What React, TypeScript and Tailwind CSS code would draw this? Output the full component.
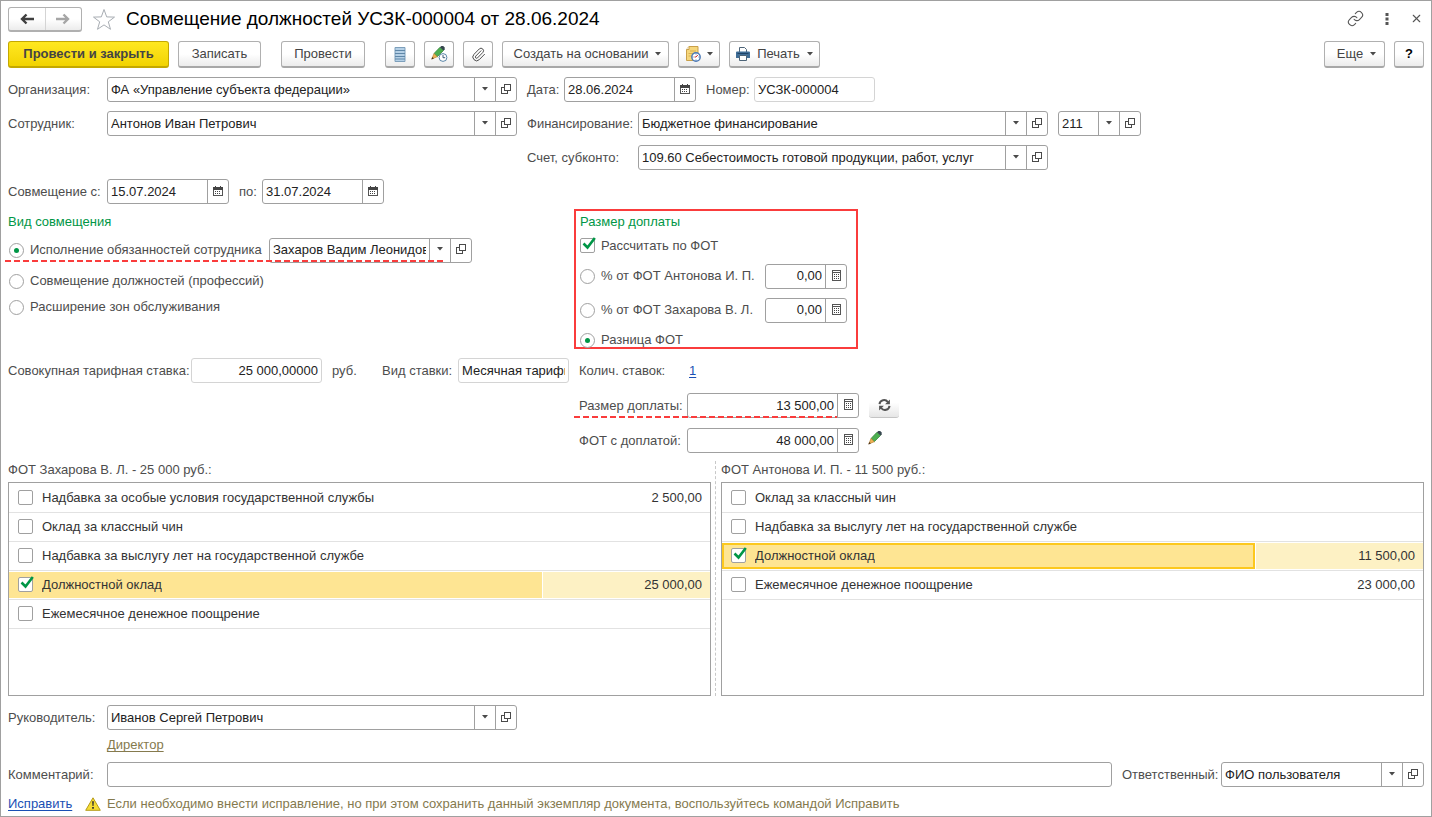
import React, { useState } from 'react'
import { Link, Paperclip, X } from 'lucide-react'

type Accrual = { name: string; sum?: string; checked?: boolean }

const zakharovRows: Accrual[] = [
  { name: 'Надбавка за особые условия государственной службы', sum: '2 500,00' },
  { name: 'Оклад за классный чин' },
  { name: 'Надбавка за выслугу лет на государственной службе' },
  { name: 'Должностной оклад', sum: '25 000,00', checked: true },
  { name: 'Ежемесячное денежное поощрение' },
]

const antonovRows: Accrual[] = [
  { name: 'Оклад за классный чин' },
  { name: 'Надбавка за выслугу лет на государственной службе' },
  { name: 'Должностной оклад', sum: '11 500,00', checked: true },
  { name: 'Ежемесячное денежное поощрение', sum: '23 000,00' },
]

/* Icons */

function Caret() {
  return (
    <svg width="6" height="4" viewBox="0 0 6 4" fill="#4a4a4a">
      <path d="M0 0h6L3 3.6z" />
    </svg>
  )
}

function OpenIcon() {
  return (
    <svg width="10" height="10" viewBox="0 0 10 10" fill="none" stroke="#4a4a4a" shapeRendering="crispEdges">
      <path d="M3.500.5h6v6h-6z" />
      <path d="M3 3.500H.5v6h6V7" />
    </svg>
  )
}

function CalendarIcon() {
  return (
    <svg width="10" height="10" viewBox="0 0 10 10" shapeRendering="crispEdges">
      <path d="M.5 1.500h9v8h-9z" fill="#fff" stroke="#555" />
      <path d="M0 1h10v3H0zM2 0h1v1H2zM7 0h1v1H7z" fill="#444" />
      <path d="M2 5.500h6M2 7.500h6" stroke="#444" strokeDasharray="1 1" />
    </svg>
  )
}

function CalcIcon() {
  return (
    <svg width="9" height="11" viewBox="0 0 9 11" shapeRendering="crispEdges">
      <path d="M.5.5h8v10h-8z" fill="#fff" stroke="#555" />
      <path d="M1 2.500h7" stroke="#555" />
      <path d="M2 4.500h5M2 6.500h5M2 8.500h5" stroke="#444" strokeDasharray="1 1" />
    </svg>
  )
}

function Arrow({ back }: { back?: boolean }) {
  return (
    <svg width="14" height="12" viewBox="0 0 14 12" fill="none" stroke={back ? '#404040' : '#a6a6a6'} strokeWidth="2.400">
      {back ? <path d="M14 6H2M6.500 1.500L2 6l4.500 4.500" /> : <path d="M0 6h12M7.500 1.500L12 6l-4.500 4.500" />}
    </svg>
  )
}

function StarIcon() {
  return (
    <svg width="24" height="23" viewBox="0 0 24 23" fill="#fff" stroke="#a8adb3">
      <path d="M12 1.500l2.700 7.400 7.800.2-6.200 4.700 2.200 7.500L12 16.900l-6.500 4.400 2.200-7.500L1.500 9.100l7.800-.2z" />
    </svg>
  )
}

function ListIcon() {
  return (
    <svg width="12" height="15" viewBox="0 0 12 15">
      <path d="M1 .5h10v14H1z" fill="#b5d0e6" stroke="#7d9fbb" />
      <path d="M1 3.500h10M1 6.500h10M1 9.500h10M1 12h10" stroke="#5f87a8" />
    </svg>
  )
}

function PencilBody() {
  return (
    <>
      <path d="M3 7.500L9 1.200l3.500 3.300-6.200 6.200z" fill="#4caf50" stroke="#2e7d32" strokeWidth=".7" />
      <path d="M9 1.200L10.300 0h1.900l1.500 1.500v1.800l-1.200 1.200z" fill="#37474f" />
      <path d="M3 7.500l3.300 3.200L.8 13z" fill="#f0b354" stroke="#b07828" strokeWidth=".6" />
      <path d="M.4 13.500l.9-2.500 1.600 1.500z" fill="#4a3520" />
    </>
  )
}

function PencilIcon() {
  return (
    <svg width="14" height="14" viewBox="0 0 14 14">
      <PencilBody />
    </svg>
  )
}

function PencilClockIcon() {
  return (
    <svg width="17" height="16" viewBox="0 0 17 16">
      <PencilBody />
      <circle cx="12" cy="11.500" r="3.900" fill="#fff" stroke="#5b86a8" />
      <path d="M12 9v2.700h2.200" fill="none" stroke="#3d5c78" />
    </svg>
  )
}

function NoteClockIcon() {
  return (
    <svg width="16" height="16" viewBox="0 0 16 16">
      <path d="M1.500 3.500l2.500-3h9v14H1.500z" fill="#f6d77c" stroke="#c9a04a" />
      <path d="M1.500 3.500H4v-3" fill="#fff" stroke="#c9a04a" />
      <path d="M5 5h6M3.500 7.500h5M3.500 10h3" stroke="#d9b04f" />
      <circle cx="11" cy="11" r="4.200" fill="#fff" stroke="#4a78b5" strokeWidth="1.400" />
      <path d="M11 7.500v1M11 13.500v1M7.500 11h1M13.500 11h1" stroke="#4a78b5" />
      <path d="M11 11l1.800-2M11 11H9.500" fill="none" stroke="#c62f2f" />
    </svg>
  )
}

function PrinterIcon() {
  return (
    <svg width="14" height="14" viewBox="0 0 14 14">
      <path d="M3.500.5h5l2 2V6h-7z" fill="#fff" stroke="#4d6478" />
      <path d="M1 4.500h12a1 1 0 011 1V11H0V5.500a1 1 0 011-1z" fill="#3f6d96" />
      <path d="M1.500 6.500h11" stroke="#1f4468" />
      <path d="M3.500 8.500h7v5h-7z" fill="#fff" stroke="#4d6478" />
    </svg>
  )
}

function RefreshIcon() {
  return (
    <svg width="13" height="12" viewBox="0 0 13 12" fill="none" stroke="#555" strokeWidth="2">
      <path d="M1.500 5.200A4.600 4.600 0 019.800 3" />
      <path d="M11.500 6.800A4.600 4.600 0 013.200 9" />
      <path d="M11.900.4v4.800H7.100zM1.100 11.600V6.800h4.800z" fill="#555" stroke="none" />
    </svg>
  )
}

function WarningIcon() {
  return (
    <svg width="16" height="14" viewBox="0 0 16 14">
      <path d="M8 .8l7.300 12.500H.7z" fill="#f5dc35" stroke="#b59b1a" strokeLinejoin="round" />
      <path d="M7.100 4.200h1.800l-.4 4.800h-1zM7.100 10h1.800v1.700H7.100z" fill="#333" />
    </svg>
  )
}

/* Controls */

function ToolButton({ className = '', children, ...rest }: React.ButtonHTMLAttributes<HTMLButtonElement>) {
  return (
    <button
      type="button"
      className={`flex h-[27px] shrink-0 items-center justify-center rounded-[3px] border border-b-2 border-[#b0b0b0] border-b-[#a8a8a8] bg-linear-to-b from-white from-50% to-[#ececec] text-[#444] ${className}`}
      {...rest}
    >
      {children}
    </button>
  )
}

type FieldProps = {
  id: string
  label?: string
  value?: string
  className: string
  kind?: 'combo' | 'date' | 'number' | 'plain'
  readOnly?: boolean
  alignRight?: boolean
}

function Field({ id, label, value = '', className, kind = 'plain', readOnly, alignRight }: FieldProps) {
  const [text, setText] = useState(value)
  const side = 'flex w-[21px] shrink-0 items-center justify-center border-l border-[#a0a0a0] pb-[2px]'
  return (
    <div className={`flex h-[25px] rounded-[3px] border bg-white ${readOnly ? 'border-[#d4d4d4]' : 'border-[#a0a0a0]'} ${className}`}>
      <input
        id={id}
        type="text"
        aria-label={label}
        value={text}
        readOnly={readOnly}
        onChange={(e) => setText(e.target.value)}
        className={`w-full min-w-0 flex-1 bg-transparent px-[3px] text-[#222] outline-none ${alignRight ? 'text-right' : ''}`}
      />
      {kind === 'combo' && (
        <>
          <button type="button" aria-label="Выбрать" className={side}><Caret /></button>
          <button type="button" aria-label="Открыть" className={side}><OpenIcon /></button>
        </>
      )}
      {kind === 'date' && <button type="button" aria-label="Календарь" className={side}><CalendarIcon /></button>}
      {kind === 'number' && <button type="button" aria-label="Калькулятор" className={side}><CalcIcon /></button>}
    </div>
  )
}

function Radio({ id, name, checked, onChange }: { id: string; name: string; checked: boolean; onChange: () => void }) {
  return (
    <input
      id={id}
      type="radio"
      name={name}
      checked={checked}
      onChange={onChange}
      className="flex size-[15px] shrink-0 appearance-none items-center justify-center rounded-full border border-[#a0a0a0] bg-white before:size-[5px] before:rounded-full checked:before:bg-[#009646]"
    />
  )
}

function Checkbox({ id, label, defaultChecked }: { id?: string; label?: string; defaultChecked?: boolean }) {
  return (
    <span className="relative block size-[15px] shrink-0">
      <input
        id={id}
        type="checkbox"
        aria-label={label}
        defaultChecked={defaultChecked}
        className="peer block size-[15px] appearance-none rounded-[2px] border border-[#a0a0a0] bg-white"
      />
      <svg
        width="14"
        height="13"
        viewBox="0 0 14 13"
        className="pointer-events-none absolute -top-px left-[2px] hidden peer-checked:block"
        fill="none"
        stroke="#009646"
        strokeWidth="2.600"
      >
        <path d="M1.500 6.500l4 4L12.800 1" />
      </svg>
    </span>
  )
}

function DashedMark({ className }: { className: string }) {
  return (
    <span
      className={`pointer-events-none absolute h-[2px] bg-[repeating-linear-gradient(90deg,#fa3c3c_0_6px,transparent_6px_9px)] ${className}`}
    />
  )
}

function AccrualTable({ title, rows, outlined }: { title: string; rows: Accrual[]; outlined?: boolean }) {
  return (
    <section className="flex min-w-0 flex-1 flex-col">
      <h2 className="h-[21px] leading-[18px] text-[#4d4d4d]">{title}</h2>
      <div className="min-h-[214px] flex-1 border border-[#a0a0a0]">
        <table className="w-full table-fixed border-collapse text-[#333]">
          <colgroup>
            <col className="w-[76%]" />
            <col />
          </colgroup>
          <tbody>
            {rows.map((row) => (
              <tr key={row.name} className="h-[29px] border-b border-[#e2e2e2]">
                <td className="p-0">
                  <div
                    className={`flex h-[26px] items-center gap-[9px] border-2 pl-[7px] ${row.checked ? 'bg-[#fee593]' : ''} ${
                      row.checked && outlined ? 'border-[#fcc81e]' : 'border-transparent'
                    }`}
                  >
                    <Checkbox label={row.name} defaultChecked={row.checked} />
                    <span className="truncate">{row.name}</span>
                  </div>
                </td>
                <td className="p-0">
                  <div className={`ml-px flex h-[26px] items-center justify-end pr-2 ${row.checked ? 'bg-[#fdf1c4]' : ''}`}>
                    {row.sum}
                  </div>
                </td>
              </tr>
            ))}
          </tbody>
        </table>
      </div>
    </section>
  )
}

export default function App() {
  const [kind, setKind] = useState('duties')
  const [calc, setCalc] = useState('difference')

  return (
    <div className="flex min-h-screen flex-col border border-[#a0a0a0] bg-white px-[7px] font-['Liberation_Sans',Arial,sans-serif] text-[13px] text-[#4d4d4d]">
      {/* Title */}
      <header className="flex h-[37px] items-center">
        <div className="flex h-[25px] w-[74px] rounded-[3px] border border-b-2 border-[#b0b0b0] bg-linear-to-b from-white from-50% to-[#ececec]">
          <button type="button" aria-label="Назад" className="flex flex-1 items-center justify-center"><Arrow back /></button>
          <button type="button" aria-label="Вперед" className="flex flex-1 items-center justify-center border-l border-[#d4d4d4]"><Arrow /></button>
        </div>
        <button type="button" aria-label="В избранное" className="mx-[10px]"><StarIcon /></button>
        <h1 className="flex-1 text-[19px] text-black">Совмещение должностей УСЗК-000004 от 28.06.2024</h1>
        <div className="flex items-center gap-4 pr-px pb-[2px] text-[#555]">
          <button type="button" aria-label="Ссылка"><Link size={17} strokeWidth={1.500} /></button>
          <button type="button" aria-label="Меню" className="px-[5px]">
            <svg width="4" height="12" viewBox="0 0 4 12" fill="#555"><path d="M.5 0h3v3h-3zM.5 4.500h3v3h-3zM.5 9h3v3h-3z" /></svg>
          </button>
          <button type="button" aria-label="Закрыть"><X size={13} strokeWidth={2} /></button>
        </div>
      </header>

      {/* Commands */}
      <div className="mt-[3px] flex items-center gap-[9px]">
        <button
          type="button"
          className="h-[27px] w-[161px] rounded-[3px] border border-b-2 border-[#c4a800] bg-linear-to-b from-[#ffe81f] to-[#f2d300] font-bold text-[#444]"
        >
          Провести и закрыть
        </button>
        <ToolButton className="w-[83px]">Записать</ToolButton>
        <ToolButton className="ml-[11px] w-[84px]">Провести</ToolButton>
        <ToolButton className="ml-[11px] w-[30px]" aria-label="Движения документа"><ListIcon /></ToolButton>
        <ToolButton className="w-[30px]" aria-label="История изменений"><PencilClockIcon /></ToolButton>
        <ToolButton className="w-[30px]" aria-label="Файлы"><Paperclip size={15} strokeWidth={1.500} /></ToolButton>
        <ToolButton className="w-[167px] gap-[7px] pl-1">Создать на основании <Caret /></ToolButton>
        <ToolButton className="w-[42px] gap-[6px]" aria-label="Напоминания"><NoteClockIcon /> <Caret /></ToolButton>
        <ToolButton className="w-[91px] gap-[7px]"><PrinterIcon /> Печать <Caret /></ToolButton>
        <ToolButton className="ml-auto w-[61px] gap-[7px] pl-1">Еще <Caret /></ToolButton>
        <ToolButton className="w-[30px] font-bold text-black">?</ToolButton>
      </div>

      {/* Document header */}
      <div className="mt-[9px] grid grid-cols-[519px_1fr] gap-y-[9px]">
        <div className="flex items-center">
          <label htmlFor="org" className="w-[99px]">Организация:</label>
          <Field id="org" kind="combo" value="ФА «Управление субъекта федерации»" className="w-[410px]" />
        </div>
        <div className="flex items-center">
          <label htmlFor="date" className="w-[37px]">Дата:</label>
          <Field id="date" kind="date" value="28.06.2024" className="w-[132px]" />
          <label htmlFor="number" className="ml-[10px] w-12">Номер:</label>
          <Field id="number" readOnly value="УСЗК-000004" className="w-[121px]" />
        </div>
        <div className="flex items-center">
          <label htmlFor="employee" className="w-[99px]">Сотрудник:</label>
          <Field id="employee" kind="combo" value="Антонов Иван Петрович" className="w-[410px]" />
        </div>
        <div className="flex items-center">
          <label htmlFor="funding" className="w-[111px]">Финансирование:</label>
          <Field id="funding" kind="combo" value="Бюджетное финансирование" className="w-[410px]" />
          <Field id="kosgu" label="КОСГУ" kind="combo" value="211" className="ml-[10px] w-[83px]" />
        </div>
        <div className="col-start-2 flex items-center">
          <label htmlFor="account" className="w-[111px]">Счет, субконто:</label>
          <Field id="account" kind="combo" value="109.60 Себестоимость готовой продукции, работ, услуг" className="w-[410px]" />
        </div>
        <div className="col-span-2 flex items-center">
          <label htmlFor="from" className="w-[99px]">Совмещение с:</label>
          <Field id="from" kind="date" value="15.07.2024" className="w-[122px]" />
          <label htmlFor="to" className="ml-[10px] w-[23px]">по:</label>
          <Field id="to" kind="date" value="31.07.2024" className="w-[122px]" />
        </div>
      </div>

      {/* Kind of combination and extra pay */}
      <div className="mt-[5px] grid grid-cols-[566px_1fr]">
        <div className="pt-[2px]">
          <h2 className="flex h-[21px] items-center text-[#009646]">Вид совмещения</h2>
          <div className="relative flex h-9 items-center gap-[6px] pl-px">
            <Radio id="duties" name="kind" checked={kind === 'duties'} onChange={() => setKind('duties')} />
            <label htmlFor="duties" className="w-[233px]">Исполнение обязанностей сотрудника</label>
            <Field id="replaced" label="Замещаемый сотрудник" kind="combo" value="Захаров Вадим Леонидович" className="w-[203px]" />
            <DashedMark className="-left-[3px] bottom-[6px] w-[438px]" />
          </div>
          <div className="flex h-[26px] items-center gap-[6px] pl-px">
            <Radio id="positions" name="kind" checked={kind === 'positions'} onChange={() => setKind('positions')} />
            <label htmlFor="positions">Совмещение должностей (профессий)</label>
          </div>
          <div className="flex h-[26px] items-center gap-[6px] pl-px">
            <Radio id="zones" name="kind" checked={kind === 'zones'} onChange={() => setKind('zones')} />
            <label htmlFor="zones">Расширение зон обслуживания</label>
          </div>
        </div>
        <div className="w-[284px] border-2 border-[#fa3c3c] pl-1">
          <h2 className="flex h-[21px] items-center text-[#009646]">Размер доплаты</h2>
          <div className="flex h-[27px] items-center gap-[6px]">
            <Checkbox id="by-fot" defaultChecked />
            <label htmlFor="by-fot">Рассчитать по ФОТ</label>
          </div>
          <div className="flex h-[34px] items-center gap-[6px]">
            <Radio id="antonov" name="calc" checked={calc === 'antonov'} onChange={() => setCalc('antonov')} />
            <label htmlFor="antonov" className="w-[158px]">% от ФОТ Антонова И. П.</label>
            <Field id="antonov-percent" label="Процент от ФОТ Антонова" kind="number" alignRight value="0,00" className="w-[82px]" />
          </div>
          <div className="flex h-[34px] items-center gap-[6px]">
            <Radio id="zakharov" name="calc" checked={calc === 'zakharov'} onChange={() => setCalc('zakharov')} />
            <label htmlFor="zakharov" className="w-[158px]">% от ФОТ Захарова В. Л.</label>
            <Field id="zakharov-percent" label="Процент от ФОТ Захарова" kind="number" alignRight value="0,00" className="w-[82px]" />
          </div>
          <div className="-mb-[6px] flex h-[26px] items-center gap-[6px]">
            <Radio id="difference" name="calc" checked={calc === 'difference'} onChange={() => setCalc('difference')} />
            <label htmlFor="difference">Разница ФОТ</label>
          </div>
        </div>
      </div>

      {/* Rate and totals */}
      <div className="mt-[9px] grid grid-cols-[566px_1fr]">
        <div className="flex h-[25px] items-center">
          <label htmlFor="rate" className="w-[183px]">Совокупная тарифная ставка:</label>
          <Field id="rate" readOnly alignRight value="25 000,00000" className="w-[131px]" />
          <span className="ml-[10px] w-[50px]">руб.</span>
          <label htmlFor="rate-kind" className="w-[76px]">Вид ставки:</label>
          <Field id="rate-kind" readOnly value="Месячная тарифная ставка" className="w-[111px]" />
        </div>
        <div className="flex flex-col gap-[10px] pl-[5px]">
          <div className="flex h-[25px] items-center">
            <span className="w-[110px]">Колич. ставок:</span>
            <a href="#rates" className="text-[#1a4fb4] underline underline-offset-2">1</a>
          </div>
          <div className="relative flex items-center">
            <label htmlFor="extra" className="w-[108px]">Размер доплаты:</label>
            <Field id="extra" kind="number" alignRight value="13 500,00" className="w-[172px]" />
            <button
              type="button"
              aria-label="Обновить"
              className="ml-[10px] flex h-[25px] w-[30px] items-center justify-center rounded-[3px] border-b border-[#c4c4c4] bg-linear-to-b from-white from-40% to-[#e6e6e6]"
            >
              <RefreshIcon />
            </button>
            <DashedMark className="-left-[5px] bottom-0 w-[263px]" />
          </div>
          <div className="flex items-center">
            <label htmlFor="total" className="w-[108px]">ФОТ с доплатой:</label>
            <Field id="total" kind="number" alignRight value="48 000,00" className="w-[172px]" />
            <button type="button" aria-label="Изменить" className="ml-[9px] pb-[6px]"><PencilIcon /></button>
          </div>
        </div>
      </div>

      {/* Accruals of both employees */}
      <div className="mt-[8px] flex flex-1">
        <AccrualTable title="ФОТ Захарова В. Л. - 25 000 руб.:" rows={zakharovRows} />
        <div className="mx-1 w-[2px] border-l border-dashed border-[#c8c8c8]" />
        <AccrualTable title="ФОТ Антонова И. П. - 11 500 руб.:" rows={antonovRows} outlined />
      </div>

      {/* Signature and comment */}
      <footer className="mt-[9px]">
        <div className="flex items-center">
          <label htmlFor="head" className="w-[99px]">Руководитель:</label>
          <Field id="head" kind="combo" value="Иванов Сергей Петрович" className="w-[410px]" />
        </div>
        <div className="flex h-[32px] items-center pb-[2px] pl-[99px]">
          <a href="#position" className="text-[#857a4e] underline underline-offset-2">Директор</a>
        </div>
        <div className="flex items-center">
          <label htmlFor="comment" className="w-[99px]">Комментарий:</label>
          <Field id="comment" className="flex-1" />
          <label htmlFor="author" className="ml-[10px] w-[99px]">Ответственный:</label>
          <Field id="author" kind="combo" value="ФИО пользователя" className="w-[203px]" />
        </div>
        <div className="flex h-[29px] items-center pt-[5px]">
          <a href="#fix" className="w-[77px] text-[#1a4fb4] underline underline-offset-2">Исправить</a>
          <WarningIcon />
          <span className="ml-[6px] text-[#857a4e]">
            Если необходимо внести исправление, но при этом сохранить данный экземпляр документа, воспользуйтесь командой Исправить
          </span>
        </div>
      </footer>
    </div>
  )
}
